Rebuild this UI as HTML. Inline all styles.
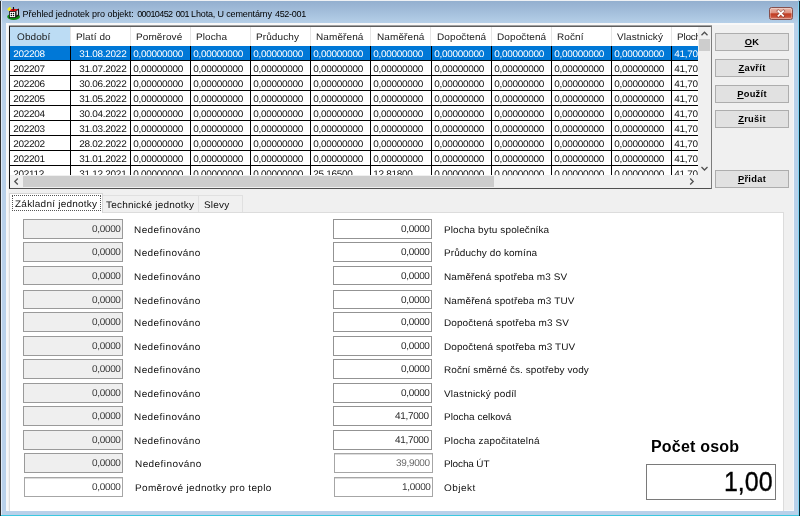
<!DOCTYPE html><html><head><meta charset="utf-8"><title>Přehled jednotek</title><style>
*{box-sizing:border-box;margin:0;padding:0}
html,body{width:800px;height:516px;overflow:hidden;background:#fff}
body{font-family:"Liberation Sans",sans-serif;font-size:10px;color:#000;position:relative}
.abs{position:absolute}
#frame{left:0;top:0;width:800px;height:516px;background:#b9d1ea;}
#titlegrad{left:1px;top:1px;width:798px;height:22px;background:linear-gradient(#93afcf,#a2bdda 45%,#b5cfe8)}
#bl{left:0;top:1px;width:1px;height:515px;background:#2d2d2d}
#bl2{left:1px;top:1px;width:1px;height:514px;background:#dfeaf7}
#bt{left:2px;top:0;width:796px;height:1px;background:#eef1f5}
#br{left:799px;top:1px;width:1px;height:515px;background:#0c2a32}
#br2{left:798px;top:2px;width:1px;height:513px;background:#84d6f6}
#bb{left:1px;top:515px;width:798px;height:1px;background:#3cc8e0}
#client{left:6px;top:22.6px;width:788px;height:488.4px;background:#f0f0f0;border:1px solid #f4f7fb;border-left:2px solid #f7f7f7;border-top:2px solid #f8f8f8}
#title{left:22.5px;top:8.2px;font-size:9px;letter-spacing:-0.15px;white-space:nowrap;color:#000;line-height:12px}
#close{left:769px;top:7px;width:24px;height:13.4px;border-radius:2.5px;border:1px solid #86504d;background:linear-gradient(#e9b8ab 0%,#dd9080 46%,#c03a20 52%,#c9503a 80%,#d98672 100%);box-shadow:inset 0 0 0 1px rgba(255,255,255,.3)}
#grid{left:9px;top:25px;width:703px;height:164px;background:#fff;border-left:1px solid #151515;border-top:2px solid #5e5e5e;border-right:2px solid #7c7c7c;border-bottom:1px solid #505050;overflow:hidden}
#gridtop{left:9px;top:25px;width:703px;height:1px;background:#a2a2a2}
.hd{top:27px;height:18.5px;line-height:20.4px;font-size:10px;color:#1a1a1a;white-space:nowrap;overflow:hidden;border-right:1px solid #e5e5e5;padding-left:5.3px;letter-spacing:0.1px}
.cell{height:15px;line-height:15px;font-size:10px;white-space:nowrap;overflow:hidden;letter-spacing:-0.3px;transform:skewX(0.04deg) scaleY(0.95);transform-origin:50% 73%}
.t{display:inline-block;transform:skewX(0.04deg) scaleY(0.95);transform-origin:50% 70%}
.t2{display:inline-block;transform:skewX(0.04deg) scaleY(0.98);transform-origin:50% 70%}
.vl{width:1px;background:#000}
.hl{height:1px;background:#000}
.btn{left:715px;width:74px;height:18px;background:#e1e1e1;border:1px solid #adadad;text-align:center;font-weight:bold;font-size:9.3px;letter-spacing:0.3px;line-height:17px;color:#000}
.btn u{text-decoration:underline}
.inp{height:19.5px;border:1px solid #939393;background:#fff;text-align:right;font-size:10px;line-height:17.6px;padding-right:1.5px;letter-spacing:-0.33px;color:#2a2a2a}
.inp.dis{background:#efefef;border-color:#9a9a9a;color:#3a3a3a}
.inp.wd{border-color:#a6a6a6;color:#3a3a3a;box-shadow:inset 0 1px 0 #dcdcdc}
.inp.gr{color:#6a6a6a}
.lbl{font-size:10px;line-height:12px;white-space:nowrap;color:#111;letter-spacing:0.1px;transform:skewX(0.04deg) scaleY(0.96);transform-origin:50% 75%}
</style></head><body><div id="root" class="abs" style="left:0;top:0;width:800px;height:516px;will-change:transform">
<div id="frame" class="abs"></div><div id="titlegrad" class="abs"></div>
<div id="bt" class="abs"></div><div id="bl" class="abs"></div><div id="bl2" class="abs"></div><div id="br" class="abs"></div><div id="br2" class="abs"></div><div id="bb" class="abs"></div>
<div id="client" class="abs"></div>
<svg class="abs" style="left:0;top:0" width="26" height="24" viewBox="0 0 26 24">
<ellipse cx="13.6" cy="16.7" rx="6.4" ry="3.2" fill="#0a8a10"/>
<polygon points="7.1,9.2 9.4,6.9 11.5,8.1 9.2,11.2" fill="#f6ef12"/>
<polygon points="9.2,11.7 11.4,8.9 16.9,8.9 18.6,8.9 15.6,11.7" fill="#ee0c0c"/>
<polygon points="15.6,11.4 18.3,8.5 19,9 19,15.6 15.8,17.5" fill="#151515"/>
<polygon points="16.5,11.4 17.9,10 18,14.6 16.6,15.6" fill="#e8e8e8"/>
<rect x="9.4" y="11.6" width="6.2" height="6" fill="#fff" stroke="#111" stroke-width="0.8"/>
<circle cx="11.4" cy="13.5" r="0.75" fill="#000"/><circle cx="13.5" cy="13.5" r="0.75" fill="#000"/>
<circle cx="11.4" cy="15.6" r="0.75" fill="#000"/><circle cx="13.5" cy="15.6" r="0.75" fill="#000"/>
<rect x="12.9" y="7" width="1.1" height="2.6" fill="#111"/>
<path d="M12.3 9.2 L13.45 10.2 L14.6 9.2" stroke="#111" stroke-width="0.6" fill="none"/>
</svg>
<div id="title" class="abs"><span style="letter-spacing:-0.03px">Přehled jednotek pro objekt: </span><span style="letter-spacing:-0.6px;margin-left:1px;word-spacing:1.3px">00010452 001 </span><span style="margin-left:-1px">Lhota, U cementárny </span><span style="letter-spacing:-0.3px;margin-left:0.8px">452-001</span></div>
<div id="close" class="abs"></div>
<svg class="abs" style="left:774px;top:8px" width="14" height="12" viewBox="0 0 14 12"><path d="M4.2 3 L9.4 8 M9.4 3 L4.2 8" stroke="#6e2b22" stroke-width="3" stroke-linecap="square" opacity=".5"/><path d="M4.4 3.2 L9.2 7.8 M9.2 3.2 L4.4 7.8" stroke="#fff" stroke-width="1.7" stroke-linecap="square"/></svg>
<div id="grid" class="abs"></div><div id="gridtop" class="abs"></div>
<div class="abs hd" style="left:10px;width:60.8px;background:#bcdcf4;padding-left:7px;"><span class="t">Období</span></div>
<div class="abs hd" style="left:70.8px;width:60.10000000000001px;"><span class="t">Platí do</span></div>
<div class="abs hd" style="left:130.9px;width:60.099999999999994px;"><span class="t">Poměrové</span></div>
<div class="abs hd" style="left:191.0px;width:60.099999999999994px;"><span class="t">Plocha</span></div>
<div class="abs hd" style="left:251.1px;width:60.099999999999994px;"><span class="t">Průduchy</span></div>
<div class="abs hd" style="left:311.2px;width:60.10000000000002px;"><span class="t">Naměřená</span></div>
<div class="abs hd" style="left:371.3px;width:60.19999999999999px;"><span class="t">Naměřená</span></div>
<div class="abs hd" style="left:431.5px;width:60.10000000000002px;"><span class="t">Dopočtená</span></div>
<div class="abs hd" style="left:491.6px;width:60.10000000000002px;"><span class="t">Dopočtená</span></div>
<div class="abs hd" style="left:551.7px;width:60.09999999999991px;"><span class="t">Roční</span></div>
<div class="abs hd" style="left:611.8px;width:60.10000000000002px;"><span class="t">Vlastnický</span></div>
<div class="abs hd" style="left:671.9px;width:26.100000000000023px;border-right:none;letter-spacing:-0.25px;"><span class="t">Plocha</span></div>
<div class="abs" style="left:10px;top:45.5px;width:688px;height:15.04px;background:#0078d7"></div>
<div class="abs cell" style="left:11px;top:45.7px;width:58.8px;height:15px;color:#fff;padding-left:2.3px;">202208</div>
<div class="abs cell" style="left:70.8px;top:45.7px;width:59.10000000000001px;height:15px;color:#fff;text-align:right;padding-right:3.7px;">31.08.2022</div>
<div class="abs cell" style="left:130.9px;top:45.7px;width:59.099999999999994px;height:15px;color:#fff;padding-left:2.3px;">0,00000000</div>
<div class="abs cell" style="left:191.0px;top:45.7px;width:59.099999999999994px;height:15px;color:#fff;padding-left:2.3px;">0,00000000</div>
<div class="abs cell" style="left:251.1px;top:45.7px;width:59.099999999999994px;height:15px;color:#fff;padding-left:2.3px;">0,00000000</div>
<div class="abs cell" style="left:311.2px;top:45.7px;width:59.10000000000002px;height:15px;color:#fff;padding-left:2.3px;">0,00000000</div>
<div class="abs cell" style="left:371.3px;top:45.7px;width:59.19999999999999px;height:15px;color:#fff;padding-left:2.3px;">0,00000000</div>
<div class="abs cell" style="left:431.5px;top:45.7px;width:59.10000000000002px;height:15px;color:#fff;padding-left:2.3px;">0,00000000</div>
<div class="abs cell" style="left:491.6px;top:45.7px;width:59.10000000000002px;height:15px;color:#fff;padding-left:2.3px;">0,00000000</div>
<div class="abs cell" style="left:551.7px;top:45.7px;width:59.09999999999991px;height:15px;color:#fff;padding-left:2.3px;">0,00000000</div>
<div class="abs cell" style="left:611.8px;top:45.7px;width:59.10000000000002px;height:15px;color:#fff;padding-left:2.3px;">0,00000000</div>
<div class="abs cell" style="left:671.9px;top:45.7px;width:26.100000000000023px;height:15px;color:#fff;padding-left:2.3px;">41,70</div>
<div class="abs hl" style="left:10px;top:60.09px;width:688px"></div>
<div class="abs cell" style="left:11px;top:60.74px;width:58.8px;height:15px;color:#111;padding-left:2.3px;">202207</div>
<div class="abs cell" style="left:70.8px;top:60.74px;width:59.10000000000001px;height:15px;color:#111;text-align:right;padding-right:3.7px;">31.07.2022</div>
<div class="abs cell" style="left:130.9px;top:60.74px;width:59.099999999999994px;height:15px;color:#111;padding-left:2.3px;">0,00000000</div>
<div class="abs cell" style="left:191.0px;top:60.74px;width:59.099999999999994px;height:15px;color:#111;padding-left:2.3px;">0,00000000</div>
<div class="abs cell" style="left:251.1px;top:60.74px;width:59.099999999999994px;height:15px;color:#111;padding-left:2.3px;">0,00000000</div>
<div class="abs cell" style="left:311.2px;top:60.74px;width:59.10000000000002px;height:15px;color:#111;padding-left:2.3px;">0,00000000</div>
<div class="abs cell" style="left:371.3px;top:60.74px;width:59.19999999999999px;height:15px;color:#111;padding-left:2.3px;">0,00000000</div>
<div class="abs cell" style="left:431.5px;top:60.74px;width:59.10000000000002px;height:15px;color:#111;padding-left:2.3px;">0,00000000</div>
<div class="abs cell" style="left:491.6px;top:60.74px;width:59.10000000000002px;height:15px;color:#111;padding-left:2.3px;">0,00000000</div>
<div class="abs cell" style="left:551.7px;top:60.74px;width:59.09999999999991px;height:15px;color:#111;padding-left:2.3px;">0,00000000</div>
<div class="abs cell" style="left:611.8px;top:60.74px;width:59.10000000000002px;height:15px;color:#111;padding-left:2.3px;">0,00000000</div>
<div class="abs cell" style="left:671.9px;top:60.74px;width:26.100000000000023px;height:15px;color:#111;padding-left:2.3px;">41,70</div>
<div class="abs hl" style="left:10px;top:75.13px;width:688px"></div>
<div class="abs cell" style="left:11px;top:75.78px;width:58.8px;height:15px;color:#111;padding-left:2.3px;">202206</div>
<div class="abs cell" style="left:70.8px;top:75.78px;width:59.10000000000001px;height:15px;color:#111;text-align:right;padding-right:3.7px;">30.06.2022</div>
<div class="abs cell" style="left:130.9px;top:75.78px;width:59.099999999999994px;height:15px;color:#111;padding-left:2.3px;">0,00000000</div>
<div class="abs cell" style="left:191.0px;top:75.78px;width:59.099999999999994px;height:15px;color:#111;padding-left:2.3px;">0,00000000</div>
<div class="abs cell" style="left:251.1px;top:75.78px;width:59.099999999999994px;height:15px;color:#111;padding-left:2.3px;">0,00000000</div>
<div class="abs cell" style="left:311.2px;top:75.78px;width:59.10000000000002px;height:15px;color:#111;padding-left:2.3px;">0,00000000</div>
<div class="abs cell" style="left:371.3px;top:75.78px;width:59.19999999999999px;height:15px;color:#111;padding-left:2.3px;">0,00000000</div>
<div class="abs cell" style="left:431.5px;top:75.78px;width:59.10000000000002px;height:15px;color:#111;padding-left:2.3px;">0,00000000</div>
<div class="abs cell" style="left:491.6px;top:75.78px;width:59.10000000000002px;height:15px;color:#111;padding-left:2.3px;">0,00000000</div>
<div class="abs cell" style="left:551.7px;top:75.78px;width:59.09999999999991px;height:15px;color:#111;padding-left:2.3px;">0,00000000</div>
<div class="abs cell" style="left:611.8px;top:75.78px;width:59.10000000000002px;height:15px;color:#111;padding-left:2.3px;">0,00000000</div>
<div class="abs cell" style="left:671.9px;top:75.78px;width:26.100000000000023px;height:15px;color:#111;padding-left:2.3px;">41,70</div>
<div class="abs hl" style="left:10px;top:90.17px;width:688px"></div>
<div class="abs cell" style="left:11px;top:90.82000000000001px;width:58.8px;height:15px;color:#111;padding-left:2.3px;">202205</div>
<div class="abs cell" style="left:70.8px;top:90.82000000000001px;width:59.10000000000001px;height:15px;color:#111;text-align:right;padding-right:3.7px;">31.05.2022</div>
<div class="abs cell" style="left:130.9px;top:90.82000000000001px;width:59.099999999999994px;height:15px;color:#111;padding-left:2.3px;">0,00000000</div>
<div class="abs cell" style="left:191.0px;top:90.82000000000001px;width:59.099999999999994px;height:15px;color:#111;padding-left:2.3px;">0,00000000</div>
<div class="abs cell" style="left:251.1px;top:90.82000000000001px;width:59.099999999999994px;height:15px;color:#111;padding-left:2.3px;">0,00000000</div>
<div class="abs cell" style="left:311.2px;top:90.82000000000001px;width:59.10000000000002px;height:15px;color:#111;padding-left:2.3px;">0,00000000</div>
<div class="abs cell" style="left:371.3px;top:90.82000000000001px;width:59.19999999999999px;height:15px;color:#111;padding-left:2.3px;">0,00000000</div>
<div class="abs cell" style="left:431.5px;top:90.82000000000001px;width:59.10000000000002px;height:15px;color:#111;padding-left:2.3px;">0,00000000</div>
<div class="abs cell" style="left:491.6px;top:90.82000000000001px;width:59.10000000000002px;height:15px;color:#111;padding-left:2.3px;">0,00000000</div>
<div class="abs cell" style="left:551.7px;top:90.82000000000001px;width:59.09999999999991px;height:15px;color:#111;padding-left:2.3px;">0,00000000</div>
<div class="abs cell" style="left:611.8px;top:90.82000000000001px;width:59.10000000000002px;height:15px;color:#111;padding-left:2.3px;">0,00000000</div>
<div class="abs cell" style="left:671.9px;top:90.82000000000001px;width:26.100000000000023px;height:15px;color:#111;padding-left:2.3px;">41,70</div>
<div class="abs hl" style="left:10px;top:105.21px;width:688px"></div>
<div class="abs cell" style="left:11px;top:105.86px;width:58.8px;height:15px;color:#111;padding-left:2.3px;">202204</div>
<div class="abs cell" style="left:70.8px;top:105.86px;width:59.10000000000001px;height:15px;color:#111;text-align:right;padding-right:3.7px;">30.04.2022</div>
<div class="abs cell" style="left:130.9px;top:105.86px;width:59.099999999999994px;height:15px;color:#111;padding-left:2.3px;">0,00000000</div>
<div class="abs cell" style="left:191.0px;top:105.86px;width:59.099999999999994px;height:15px;color:#111;padding-left:2.3px;">0,00000000</div>
<div class="abs cell" style="left:251.1px;top:105.86px;width:59.099999999999994px;height:15px;color:#111;padding-left:2.3px;">0,00000000</div>
<div class="abs cell" style="left:311.2px;top:105.86px;width:59.10000000000002px;height:15px;color:#111;padding-left:2.3px;">0,00000000</div>
<div class="abs cell" style="left:371.3px;top:105.86px;width:59.19999999999999px;height:15px;color:#111;padding-left:2.3px;">0,00000000</div>
<div class="abs cell" style="left:431.5px;top:105.86px;width:59.10000000000002px;height:15px;color:#111;padding-left:2.3px;">0,00000000</div>
<div class="abs cell" style="left:491.6px;top:105.86px;width:59.10000000000002px;height:15px;color:#111;padding-left:2.3px;">0,00000000</div>
<div class="abs cell" style="left:551.7px;top:105.86px;width:59.09999999999991px;height:15px;color:#111;padding-left:2.3px;">0,00000000</div>
<div class="abs cell" style="left:611.8px;top:105.86px;width:59.10000000000002px;height:15px;color:#111;padding-left:2.3px;">0,00000000</div>
<div class="abs cell" style="left:671.9px;top:105.86px;width:26.100000000000023px;height:15px;color:#111;padding-left:2.3px;">41,70</div>
<div class="abs hl" style="left:10px;top:120.25px;width:688px"></div>
<div class="abs cell" style="left:11px;top:120.89999999999999px;width:58.8px;height:15px;color:#111;padding-left:2.3px;">202203</div>
<div class="abs cell" style="left:70.8px;top:120.89999999999999px;width:59.10000000000001px;height:15px;color:#111;text-align:right;padding-right:3.7px;">31.03.2022</div>
<div class="abs cell" style="left:130.9px;top:120.89999999999999px;width:59.099999999999994px;height:15px;color:#111;padding-left:2.3px;">0,00000000</div>
<div class="abs cell" style="left:191.0px;top:120.89999999999999px;width:59.099999999999994px;height:15px;color:#111;padding-left:2.3px;">0,00000000</div>
<div class="abs cell" style="left:251.1px;top:120.89999999999999px;width:59.099999999999994px;height:15px;color:#111;padding-left:2.3px;">0,00000000</div>
<div class="abs cell" style="left:311.2px;top:120.89999999999999px;width:59.10000000000002px;height:15px;color:#111;padding-left:2.3px;">0,00000000</div>
<div class="abs cell" style="left:371.3px;top:120.89999999999999px;width:59.19999999999999px;height:15px;color:#111;padding-left:2.3px;">0,00000000</div>
<div class="abs cell" style="left:431.5px;top:120.89999999999999px;width:59.10000000000002px;height:15px;color:#111;padding-left:2.3px;">0,00000000</div>
<div class="abs cell" style="left:491.6px;top:120.89999999999999px;width:59.10000000000002px;height:15px;color:#111;padding-left:2.3px;">0,00000000</div>
<div class="abs cell" style="left:551.7px;top:120.89999999999999px;width:59.09999999999991px;height:15px;color:#111;padding-left:2.3px;">0,00000000</div>
<div class="abs cell" style="left:611.8px;top:120.89999999999999px;width:59.10000000000002px;height:15px;color:#111;padding-left:2.3px;">0,00000000</div>
<div class="abs cell" style="left:671.9px;top:120.89999999999999px;width:26.100000000000023px;height:15px;color:#111;padding-left:2.3px;">41,70</div>
<div class="abs hl" style="left:10px;top:135.29px;width:688px"></div>
<div class="abs cell" style="left:11px;top:135.94px;width:58.8px;height:15px;color:#111;padding-left:2.3px;">202202</div>
<div class="abs cell" style="left:70.8px;top:135.94px;width:59.10000000000001px;height:15px;color:#111;text-align:right;padding-right:3.7px;">28.02.2022</div>
<div class="abs cell" style="left:130.9px;top:135.94px;width:59.099999999999994px;height:15px;color:#111;padding-left:2.3px;">0,00000000</div>
<div class="abs cell" style="left:191.0px;top:135.94px;width:59.099999999999994px;height:15px;color:#111;padding-left:2.3px;">0,00000000</div>
<div class="abs cell" style="left:251.1px;top:135.94px;width:59.099999999999994px;height:15px;color:#111;padding-left:2.3px;">0,00000000</div>
<div class="abs cell" style="left:311.2px;top:135.94px;width:59.10000000000002px;height:15px;color:#111;padding-left:2.3px;">0,00000000</div>
<div class="abs cell" style="left:371.3px;top:135.94px;width:59.19999999999999px;height:15px;color:#111;padding-left:2.3px;">0,00000000</div>
<div class="abs cell" style="left:431.5px;top:135.94px;width:59.10000000000002px;height:15px;color:#111;padding-left:2.3px;">0,00000000</div>
<div class="abs cell" style="left:491.6px;top:135.94px;width:59.10000000000002px;height:15px;color:#111;padding-left:2.3px;">0,00000000</div>
<div class="abs cell" style="left:551.7px;top:135.94px;width:59.09999999999991px;height:15px;color:#111;padding-left:2.3px;">0,00000000</div>
<div class="abs cell" style="left:611.8px;top:135.94px;width:59.10000000000002px;height:15px;color:#111;padding-left:2.3px;">0,00000000</div>
<div class="abs cell" style="left:671.9px;top:135.94px;width:26.100000000000023px;height:15px;color:#111;padding-left:2.3px;">41,70</div>
<div class="abs hl" style="left:10px;top:150.33px;width:688px"></div>
<div class="abs cell" style="left:11px;top:150.98px;width:58.8px;height:15px;color:#111;padding-left:2.3px;">202201</div>
<div class="abs cell" style="left:70.8px;top:150.98px;width:59.10000000000001px;height:15px;color:#111;text-align:right;padding-right:3.7px;">31.01.2022</div>
<div class="abs cell" style="left:130.9px;top:150.98px;width:59.099999999999994px;height:15px;color:#111;padding-left:2.3px;">0,00000000</div>
<div class="abs cell" style="left:191.0px;top:150.98px;width:59.099999999999994px;height:15px;color:#111;padding-left:2.3px;">0,00000000</div>
<div class="abs cell" style="left:251.1px;top:150.98px;width:59.099999999999994px;height:15px;color:#111;padding-left:2.3px;">0,00000000</div>
<div class="abs cell" style="left:311.2px;top:150.98px;width:59.10000000000002px;height:15px;color:#111;padding-left:2.3px;">0,00000000</div>
<div class="abs cell" style="left:371.3px;top:150.98px;width:59.19999999999999px;height:15px;color:#111;padding-left:2.3px;">0,00000000</div>
<div class="abs cell" style="left:431.5px;top:150.98px;width:59.10000000000002px;height:15px;color:#111;padding-left:2.3px;">0,00000000</div>
<div class="abs cell" style="left:491.6px;top:150.98px;width:59.10000000000002px;height:15px;color:#111;padding-left:2.3px;">0,00000000</div>
<div class="abs cell" style="left:551.7px;top:150.98px;width:59.09999999999991px;height:15px;color:#111;padding-left:2.3px;">0,00000000</div>
<div class="abs cell" style="left:611.8px;top:150.98px;width:59.10000000000002px;height:15px;color:#111;padding-left:2.3px;">0,00000000</div>
<div class="abs cell" style="left:671.9px;top:150.98px;width:26.100000000000023px;height:15px;color:#111;padding-left:2.3px;">41,70</div>
<div class="abs hl" style="left:10px;top:165.37px;width:688px"></div>
<div class="abs cell" style="left:11px;top:166.01999999999998px;width:58.8px;height:9.180000000000007px;color:#111;padding-left:2.3px;">202112</div>
<div class="abs cell" style="left:70.8px;top:166.01999999999998px;width:59.10000000000001px;height:9.180000000000007px;color:#111;text-align:right;padding-right:3.7px;">31.12.2021</div>
<div class="abs cell" style="left:130.9px;top:166.01999999999998px;width:59.099999999999994px;height:9.180000000000007px;color:#111;padding-left:2.3px;">0,00000000</div>
<div class="abs cell" style="left:191.0px;top:166.01999999999998px;width:59.099999999999994px;height:9.180000000000007px;color:#111;padding-left:2.3px;">0,00000000</div>
<div class="abs cell" style="left:251.1px;top:166.01999999999998px;width:59.099999999999994px;height:9.180000000000007px;color:#111;padding-left:2.3px;">0,00000000</div>
<div class="abs cell" style="left:311.2px;top:166.01999999999998px;width:59.10000000000002px;height:9.180000000000007px;color:#111;padding-left:2.3px;">25,16500</div>
<div class="abs cell" style="left:371.3px;top:166.01999999999998px;width:59.19999999999999px;height:9.180000000000007px;color:#111;padding-left:2.3px;">12,81800</div>
<div class="abs cell" style="left:431.5px;top:166.01999999999998px;width:59.10000000000002px;height:9.180000000000007px;color:#111;padding-left:2.3px;">0,00000000</div>
<div class="abs cell" style="left:491.6px;top:166.01999999999998px;width:59.10000000000002px;height:9.180000000000007px;color:#111;padding-left:2.3px;">0,00000000</div>
<div class="abs cell" style="left:551.7px;top:166.01999999999998px;width:59.09999999999991px;height:9.180000000000007px;color:#111;padding-left:2.3px;">0,00000000</div>
<div class="abs cell" style="left:611.8px;top:166.01999999999998px;width:59.10000000000002px;height:9.180000000000007px;color:#111;padding-left:2.3px;">0,00000000</div>
<div class="abs cell" style="left:671.9px;top:166.01999999999998px;width:26.100000000000023px;height:9.180000000000007px;color:#111;padding-left:2.3px;">41,70</div>
<div class="abs vl" style="left:69.8px;top:45.6px;height:129.4px"></div>
<div class="abs vl" style="left:129.9px;top:45.6px;height:129.4px"></div>
<div class="abs vl" style="left:190.0px;top:45.6px;height:129.4px"></div>
<div class="abs vl" style="left:250.1px;top:45.6px;height:129.4px"></div>
<div class="abs vl" style="left:310.2px;top:45.6px;height:129.4px"></div>
<div class="abs vl" style="left:370.3px;top:45.6px;height:129.4px"></div>
<div class="abs vl" style="left:430.5px;top:45.6px;height:129.4px"></div>
<div class="abs vl" style="left:490.6px;top:45.6px;height:129.4px"></div>
<div class="abs vl" style="left:550.7px;top:45.6px;height:129.4px"></div>
<div class="abs vl" style="left:610.8px;top:45.6px;height:129.4px"></div>
<div class="abs vl" style="left:670.9px;top:45.6px;height:129.4px"></div>
<div class="abs" style="left:698px;top:27px;width:13px;height:148px;background:#f0f0f0"></div>
<div class="abs" style="left:698.5px;top:39px;width:11.5px;height:12.4px;background:#cdcdcd"></div>
<svg class="abs" style="left:698px;top:27px" width="13" height="13"><path d="M3.5 8.2 L6.5 5.2 L9.5 8.2" fill="none" stroke="#505050" stroke-width="1.3"/></svg>
<svg class="abs" style="left:698px;top:162px" width="13" height="13"><path d="M3.5 5 L6.5 8 L9.5 5" fill="none" stroke="#505050" stroke-width="1.3"/></svg>
<div class="abs" style="left:10px;top:175px;width:701px;height:13px;background:#f0f0f0"></div>
<div class="abs" style="left:23px;top:176px;width:471px;height:11px;background:#cdcdcd"></div>
<svg class="abs" style="left:10px;top:175px" width="13" height="13"><path d="M7.8 3.5 L4.8 6.5 L7.8 9.5" fill="none" stroke="#505050" stroke-width="1.3"/></svg>
<svg class="abs" style="left:685px;top:175px" width="13" height="13"><path d="M5.2 3.5 L8.2 6.5 L5.2 9.5" fill="none" stroke="#505050" stroke-width="1.3"/></svg>
<div class="abs btn" style="top:33px"><u>O</u>K</div>
<div class="abs btn" style="top:59px"><u>Z</u>avřít</div>
<div class="abs btn" style="top:84.5px"><u>P</u>oužít</div>
<div class="abs btn" style="top:110px"><u>Z</u>rušit</div>
<div class="abs btn" style="top:170px"><u>P</u>řidat</div>
<div class="abs" style="left:9px;top:212px;width:775px;height:299px;background:#fff;border:1px solid #dcdcdc;border-bottom:none"></div>
<div class="abs" style="left:102px;top:195px;width:97px;height:17px;background:#f0f0f0;border:1px solid #e0e0e0;border-bottom:none"></div>
<div class="abs" style="left:198px;top:195px;width:45px;height:17px;background:#f0f0f0;border:1px solid #e0e0e0;border-bottom:none"></div>
<div class="abs" style="left:9px;top:193px;width:94px;height:20px;background:#fff;border:1px solid #d6d6d6;border-bottom:none"></div>
<div class="abs" style="left:11.5px;top:195.3px;width:89.5px;height:15.7px;border:1px dotted #555"></div>
<div class="abs lbl" style="left:14.6px;top:198px;letter-spacing:0.23px">Základní jednotky</div>
<div class="abs lbl" style="left:106px;top:198.5px;letter-spacing:0.2px">Technické jednotky</div>
<div class="abs lbl" style="left:204px;top:198.5px;letter-spacing:0.2px">Slevy</div>
<div class="abs inp dis" style="left:23.1px;top:219px;width:99.8px"><span class="t2">0,0000</span></div>
<div class="abs lbl" style="left:134.2px;top:223.8px;letter-spacing:0.42px">Nedefinováno</div>
<div class="abs inp" style="left:332.7px;top:219px;width:99.1px"><span class="t2">0,0000</span></div>
<div class="abs lbl" style="left:443.7px;top:223.8px;letter-spacing:0.11px">Plocha bytu společníka</div>
<div class="abs inp dis" style="left:23.1px;top:242.4px;width:99.8px"><span class="t2">0,0000</span></div>
<div class="abs lbl" style="left:134.2px;top:247.20000000000002px;letter-spacing:0.42px">Nedefinováno</div>
<div class="abs inp" style="left:332.7px;top:242.4px;width:99.1px"><span class="t2">0,0000</span></div>
<div class="abs lbl" style="left:443.7px;top:247.20000000000002px;letter-spacing:0.08px">Průduchy do komína</div>
<div class="abs inp dis" style="left:23.1px;top:265.8px;width:99.8px"><span class="t2">0,0000</span></div>
<div class="abs lbl" style="left:134.2px;top:270.6px;letter-spacing:0.42px">Nedefinováno</div>
<div class="abs inp" style="left:332.7px;top:265.8px;width:99.1px"><span class="t2">0,0000</span></div>
<div class="abs lbl" style="left:443.7px;top:270.6px;letter-spacing:0.09px">Naměřená spotřeba m3 SV</div>
<div class="abs inp dis" style="left:23.1px;top:289.7px;width:99.8px"><span class="t2">0,0000</span></div>
<div class="abs lbl" style="left:134.2px;top:294.5px;letter-spacing:0.42px">Nedefinováno</div>
<div class="abs inp" style="left:332.7px;top:289.7px;width:99.1px"><span class="t2">0,0000</span></div>
<div class="abs lbl" style="left:443.7px;top:294.5px;letter-spacing:0.12px">Naměřená spotřeba m3 TUV</div>
<div class="abs inp dis" style="left:23.1px;top:312.2px;width:99.8px"><span class="t2">0,0000</span></div>
<div class="abs lbl" style="left:134.2px;top:317.0px;letter-spacing:0.42px">Nedefinováno</div>
<div class="abs inp" style="left:332.7px;top:312.2px;width:99.1px"><span class="t2">0,0000</span></div>
<div class="abs lbl" style="left:443.7px;top:317.0px;letter-spacing:0.09px">Dopočtená spotřeba m3 SV</div>
<div class="abs inp dis" style="left:23.1px;top:336.2px;width:99.8px"><span class="t2">0,0000</span></div>
<div class="abs lbl" style="left:134.2px;top:341.0px;letter-spacing:0.42px">Nedefinováno</div>
<div class="abs inp" style="left:332.7px;top:336.2px;width:99.1px"><span class="t2">0,0000</span></div>
<div class="abs lbl" style="left:443.7px;top:341.0px;letter-spacing:0.08px">Dopočtená spotřeba m3 TUV</div>
<div class="abs inp dis" style="left:23.1px;top:359px;width:99.8px"><span class="t2">0,0000</span></div>
<div class="abs lbl" style="left:134.2px;top:363.8px;letter-spacing:0.42px">Nedefinováno</div>
<div class="abs inp" style="left:332.7px;top:359px;width:99.1px"><span class="t2">0,0000</span></div>
<div class="abs lbl" style="left:443.7px;top:363.8px;letter-spacing:0.07px">Roční směrné čs. spotřeby vody</div>
<div class="abs inp dis" style="left:23.1px;top:383px;width:99.8px"><span class="t2">0,0000</span></div>
<div class="abs lbl" style="left:134.2px;top:387.8px;letter-spacing:0.42px">Nedefinováno</div>
<div class="abs inp" style="left:332.7px;top:383px;width:99.1px"><span class="t2">0,0000</span></div>
<div class="abs lbl" style="left:443.7px;top:387.8px;letter-spacing:0.19px">Vlastnický podíl</div>
<div class="abs inp dis" style="left:23.1px;top:406.1px;width:99.8px"><span class="t2">0,0000</span></div>
<div class="abs lbl" style="left:134.2px;top:410.90000000000003px;letter-spacing:0.42px">Nedefinováno</div>
<div class="abs inp" style="left:332.7px;top:406.1px;width:99.1px"><span class="t2">41,7000</span></div>
<div class="abs lbl" style="left:443.7px;top:410.90000000000003px;letter-spacing:0.01px">Plocha celková</div>
<div class="abs inp dis" style="left:23.1px;top:430.1px;width:99.8px"><span class="t2">0,0000</span></div>
<div class="abs lbl" style="left:134.2px;top:434.90000000000003px;letter-spacing:0.42px">Nedefinováno</div>
<div class="abs inp" style="left:332.7px;top:430.1px;width:99.1px"><span class="t2">41,7000</span></div>
<div class="abs lbl" style="left:443.7px;top:434.90000000000003px;letter-spacing:0.17px">Plocha započitatelná</div>
<div class="abs inp dis" style="left:24.2px;top:453.4px;width:98.8px"><span class="t2">0,0000</span></div>
<div class="abs lbl" style="left:135.2px;top:458.2px;letter-spacing:0.42px">Nedefinováno</div>
<div class="abs inp wd gr" style="left:333.5px;top:453.4px;width:99.3px"><span class="t2">39,9000</span></div>
<div class="abs lbl" style="left:444.4px;top:458.2px;letter-spacing:-0.14px">Plocha ÚT</div>
<div class="abs inp wd" style="left:24.2px;top:477.3px;width:98.8px"><span class="t2">0,0000</span></div>
<div class="abs lbl" style="left:135.2px;top:482.1px;letter-spacing:0.35px">Poměrové jednotky pro teplo</div>
<div class="abs inp wd" style="left:333.5px;top:477.3px;width:99.3px"><span class="t2">1,0000</span></div>
<div class="abs lbl" style="left:444.4px;top:482.1px;letter-spacing:0.5px">Objekt</div>
<div class="abs" style="left:651px;top:437px;font-size:16px;font-weight:bold;line-height:20px;letter-spacing:0.2px;white-space:nowrap">Počet osob</div>
<div class="abs" style="left:646px;top:464px;width:130px;height:36px;border:1px solid #7a7a7a;background:#fff;text-align:right;font-size:27px;line-height:34.2px;padding-right:2px"><span style="display:inline-block;transform:scaleX(0.925);transform-origin:100% 50%;-webkit-text-stroke:0.35px #000">1,00</span></div>
</div></body></html>
